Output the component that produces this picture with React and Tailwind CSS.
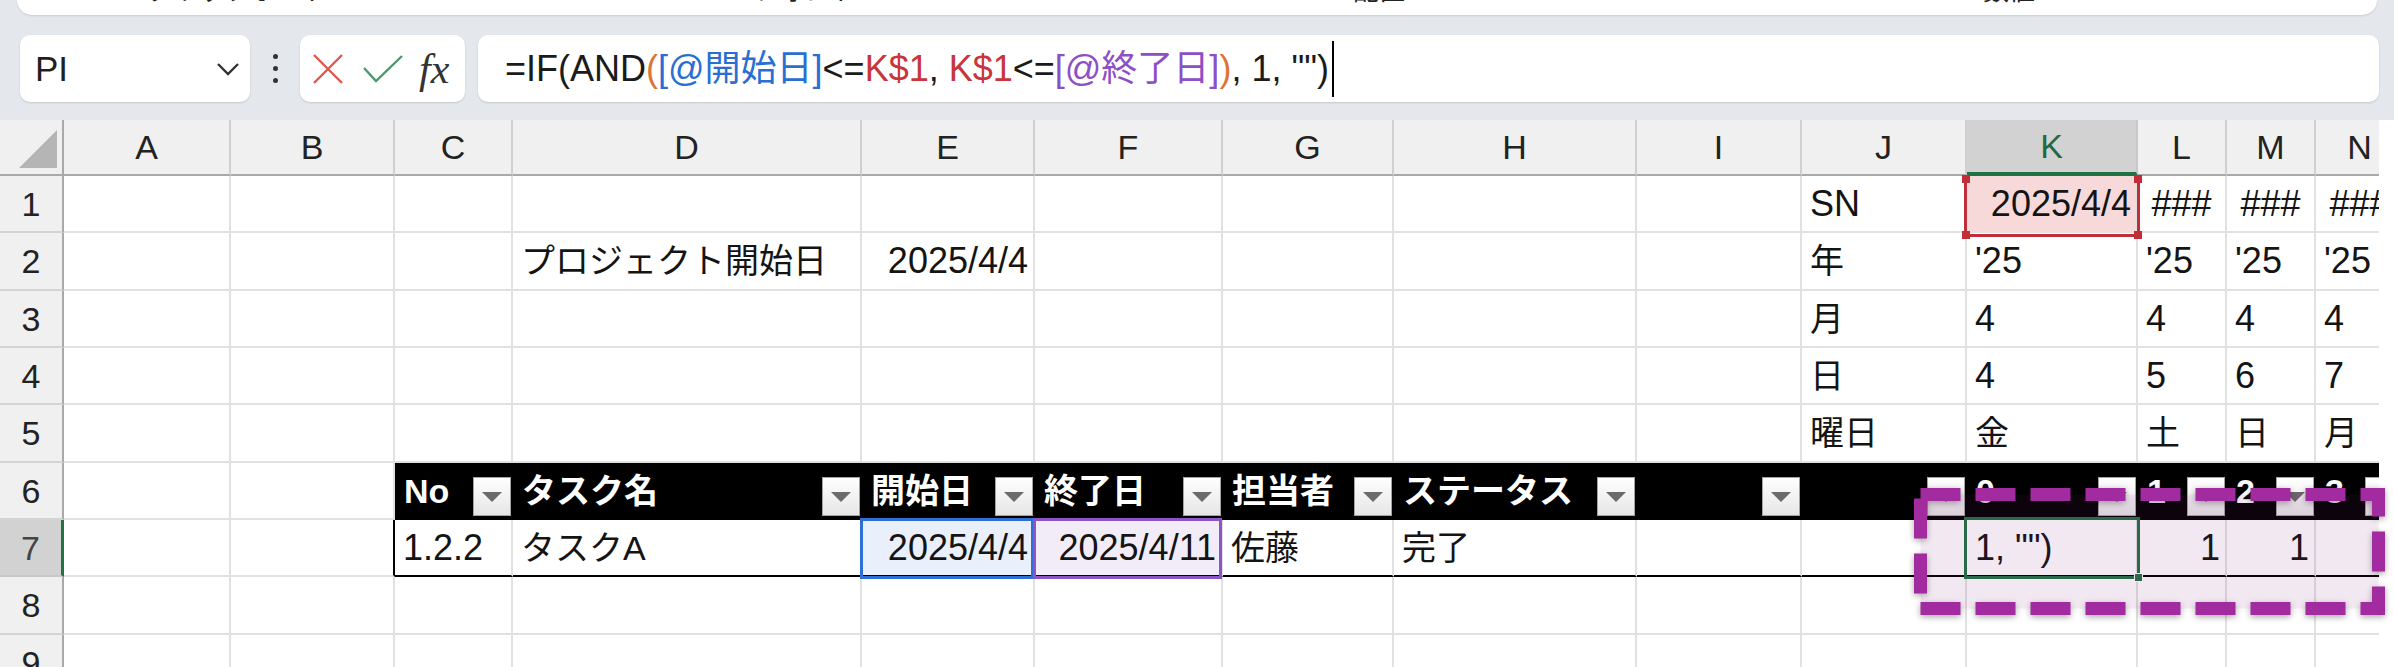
import React from 'react'

const COLS = [
  { key: 'A', w: 'w-[167px]' },
  { key: 'B', w: 'w-[164px]' },
  { key: 'C', w: 'w-[118px]' },
  { key: 'D', w: 'w-[349px]' },
  { key: 'E', w: 'w-[173px]' },
  { key: 'F', w: 'w-[188px]' },
  { key: 'G', w: 'w-[171px]' },
  { key: 'H', w: 'w-[243px]' },
  { key: 'I', w: 'w-[165px]' },
  { key: 'J', w: 'w-[165px]' },
  { key: 'K', w: 'w-[171px]' },
  { key: 'L', w: 'w-[89px]' },
  { key: 'M', w: 'w-[89px]' },
  { key: 'N', w: 'w-[89px]' },
]

// row heights (px) so that the rows land where the sheet draws them
const ROW_H = ['h-[57px]', 'h-[58px]', 'h-[57px]', 'h-[57px]', 'h-[58px]', 'h-[57px]', 'h-[57px]', 'h-[58px]', 'h-[57px]']

const CELLS = {
  J1: { v: 'SN' },
  K1: { v: '2025/4/4', align: 'right', mark: 'red' },
  L1: { v: '###', align: 'center' },
  M1: { v: '###', align: 'center' },
  N1: { v: '###', align: 'center' },
  D2: { v: 'プロジェクト開始日' },
  E2: { v: '2025/4/4', align: 'right' },
  J2: { v: '年' },
  K2: { v: "'25" },
  L2: { v: "'25" },
  M2: { v: "'25" },
  N2: { v: "'25" },
  J3: { v: '月' },
  K3: { v: '4' },
  L3: { v: '4' },
  M3: { v: '4' },
  N3: { v: '4' },
  J4: { v: '日' },
  K4: { v: '4' },
  L4: { v: '5' },
  M4: { v: '6' },
  N4: { v: '7' },
  J5: { v: '曜日' },
  K5: { v: '金' },
  L5: { v: '土' },
  M5: { v: '日' },
  N5: { v: '月' },
  C6: { v: 'No' },
  D6: { v: 'タスク名' },
  E6: { v: '開始日' },
  F6: { v: '終了日' },
  G6: { v: '担当者' },
  H6: { v: 'ステータス' },
  I6: { v: '' },
  J6: { v: '' },
  K6: { v: '0' },
  L6: { v: '1' },
  M6: { v: '2' },
  N6: { v: '3' },
  C7: { v: '1.2.2' },
  D7: { v: 'タスクA' },
  E7: { v: '2025/4/4', align: 'right', mark: 'blue' },
  F7: { v: '2025/4/11', align: 'right', mark: 'purple' },
  G7: { v: '佐藤' },
  H7: { v: '完了' },
  K7: { v: '1, "")', mark: 'active' },
  L7: { v: '1', align: 'right' },
  M7: { v: '1', align: 'right' },
}

const hasCjk = (s) => /[\u3000-\u9fff\uff00-\uffef]/.test(s || '')

function FilterButton() {
  return (
    <span className="mb-[2px] ml-auto flex h-[39px] w-[38px] shrink-0 items-center justify-center self-end border border-[#a3a3a3] bg-gradient-to-b from-white to-[#e6e6e6]">
      <svg width="20" height="10" viewBox="0 0 20 10">
        <path d="M0 0H20L10 10Z" fill="#6b6b6b" />
      </svg>
    </span>
  )
}

function Mark({ kind }) {
  if (kind === 'red') {
    return (
      <div className="pointer-events-none absolute -bottom-[6px] -left-[3px] -right-[4px] top-0 z-10 border-x-[3px] border-b-[3px] border-[#c32d37]">
        <span className="absolute -left-[5px] -top-[1px] h-[8px] w-[8px] bg-[#c32d37]" />
        <span className="absolute -right-[5px] -top-[1px] h-[8px] w-[8px] bg-[#c32d37]" />
        <span className="absolute -bottom-[5px] -left-[5px] h-[8px] w-[8px] bg-[#c32d37]" />
        <span className="absolute -bottom-[5px] -right-[5px] h-[8px] w-[8px] bg-[#c32d37]" />
      </div>
    )
  }
  if (kind === 'blue') {
    return <div className="pointer-events-none absolute -bottom-[4px] -left-[2px] -right-[1px] -top-[2px] z-10 border-[3px] border-[#2d6fd2]" />
  }
  if (kind === 'purple') {
    return <div className="pointer-events-none absolute -bottom-[4px] -left-[2px] -right-[1px] -top-[2px] z-10 border-[3px] border-[#8c55c6]" />
  }
  return (
    <div className="pointer-events-none absolute -bottom-[4px] -left-[3px] -right-[4px] -top-[3px] z-10 border-[3px] border-[#217346]">
      <span className="absolute -bottom-[6px] -right-[6px] h-[9px] w-[9px] border border-white bg-[#217346]" />
    </div>
  )
}

function Cell({ col, ci, row }) {
  const c = CELLS[col.key + row] || {}
  const isHead = row === 6 && ci >= 2
  const inTable = row === 7 && ci >= 2

  if (isHead) {
    return (
      <div className={`${col.w} relative flex shrink-0 items-center whitespace-nowrap border-b-2 border-r-2 border-black bg-black pl-[9px] text-[34px] font-bold leading-none text-white`}>
        <span>{c.v}</span>
        <FilterButton />
      </div>
    )
  }

  let cls = `${col.w} relative flex shrink-0 items-center whitespace-nowrap border-b-2 border-r-2 leading-none text-[#141414]`
  cls += hasCjk(c.v) ? ' text-[34px]' : ' text-[36px]'
  if (inTable) cls += ' border-b-black border-r-[#e1e1e1]'
  else if (row === 7 && col.key === 'B') cls += ' border-b-[#e1e1e1] border-r-black'
  else cls += ' border-b-[#e1e1e1] border-r-[#e1e1e1]'

  if (c.align === 'right') cls += ' justify-end pr-[5px]'
  else if (c.align === 'center') cls += ' justify-center'
  else cls += ' pl-[8px]'

  if (c.mark === 'red') cls += ' bg-[#f7d9da]'
  else if (c.mark === 'blue') cls += ' bg-[#e9f0fb]'
  else if (c.mark === 'purple') cls += ' bg-[#f2ecf8]'
  else cls += ' bg-white'

  return (
    <div className={cls}>
      <span>{c.v}</span>
      {c.mark ? <Mark kind={c.mark} /> : null}
    </div>
  )
}

function FormulaBar() {
  return (
    <div className="h-[120px] bg-[#e4e7eb]">
      <div className="mx-[17px] flex h-[15px] items-start overflow-hidden rounded-b-[16px] bg-white text-[26px] leading-none text-[#222] shadow-[0_1px_2px_rgba(0,0,0,0.12)]">
        <span className="-mt-[22px] ml-[130px] w-[200px]">クリップボード</span>
        <span className="-mt-[22px] ml-[406px] w-[110px]">フォント</span>
        <span className="-mt-[22px] ml-[490px] w-[60px]">配置</span>
        <span className="-mt-[22px] ml-[570px] w-[60px]">数値</span>
      </div>

      <div className="mt-[20px] flex h-[67px] items-stretch pl-[20px]">
        <div className="flex w-[230px] shrink-0 items-center rounded-[10px] bg-white pl-[15px] pr-[10px] shadow-[0_1px_2px_rgba(0,0,0,0.14)]">
          <span className="text-[35px] leading-none text-[#1f1f1f]">PI</span>
          <svg className="ml-auto" width="24" height="14" viewBox="0 0 24 14">
            <path d="M2 2L12 12L22 2" fill="none" stroke="#333" strokeWidth="2.4" />
          </svg>
        </div>

        <div className="flex w-[50px] shrink-0 flex-col items-center justify-center gap-[7px]">
          <span className="h-[5px] w-[5px] rounded-full bg-[#333]" />
          <span className="h-[5px] w-[5px] rounded-full bg-[#333]" />
          <span className="h-[5px] w-[5px] rounded-full bg-[#333]" />
        </div>

        <div className="flex w-[165px] shrink-0 items-center rounded-[10px] bg-white pl-[13px] shadow-[0_1px_2px_rgba(0,0,0,0.14)]">
          <svg width="30" height="30" viewBox="0 0 30 30">
            <path d="M1 1L29 29M29 1L1 29" stroke="#e0584d" strokeWidth="2.4" />
          </svg>
          <svg className="ml-[20px]" width="40" height="28" viewBox="0 0 40 28">
            <path d="M1 13L13 26L39 1" fill="none" stroke="#4b9a6b" strokeWidth="2.4" />
          </svg>
          <span className="ml-[16px] font-['Liberation_Serif',serif] text-[42px] italic leading-none text-[#333]">fx</span>
        </div>

        <div className="ml-[13px] flex w-[1901px] shrink-0 items-center rounded-[10px] bg-white pl-[27px] text-[36px] leading-none text-[#1b1b1b] shadow-[0_1px_2px_rgba(0,0,0,0.14)]">
          <span>=IF(AND</span>
          <span className="text-[#dd7436]">(</span>
          <span className="text-[#2a6fd0]">[@開始日]</span>
          <span>&lt;=</span>
          <span className="text-[#c9353a]">K$1</span>
          <span>,&nbsp;</span>
          <span className="text-[#c9353a]">K$1</span>
          <span>&lt;=</span>
          <span className="text-[#8d4fc5]">[@終了日]</span>
          <span className="text-[#dd7436]">)</span>
          <span>, 1, "")</span>
          <span className="ml-[3px] h-[56px] w-[2px] bg-black" />
        </div>
      </div>
    </div>
  )
}

export default function App() {
  return (
    <div className="relative h-[667px] w-[2394px] overflow-hidden bg-white font-['Liberation_Sans','Noto_Sans_CJK_JP',sans-serif]">
      <FormulaBar />

      <div className="w-[2379px] overflow-hidden">
        {/* column headers */}
        <div className="flex h-[56px]">
          <div className="w-[64px] shrink-0 border-b-2 border-r-2 border-[#a9a9a9] bg-[#f0f0f0]">
            <svg width="62" height="54" viewBox="0 0 62 54">
              <polygon points="19,48 57,10 57,48" fill="#b5b5b5" />
            </svg>
          </div>
          {COLS.map((col) =>
            col.key === 'K' ? (
              <div
                key={col.key}
                className={`${col.w} flex shrink-0 items-center justify-center border-b-[4px] border-r-2 border-b-[#1f7244] border-r-[#c8c8c8] bg-[#d2d2d2] text-[34px] leading-none text-[#1f6b45]`}
              >
                {col.key}
              </div>
            ) : (
              <div
                key={col.key}
                className={`${col.w} flex shrink-0 items-center justify-center border-b-2 border-r-2 border-b-[#a9a9a9] border-r-[#d0d0d0] bg-[#f0f0f0] text-[34px] leading-none text-[#222]`}
              >
                {col.key}
              </div>
            ),
          )}
        </div>

        {/* rows */}
        {ROW_H.map((h, ri) => {
          const row = ri + 1
          return (
            <div key={row} className={`flex ${h}`}>
              {row === 7 ? (
                <div className="flex w-[64px] shrink-0 items-center justify-center border-b-2 border-r-[3px] border-b-[#c8c8c8] border-r-[#217346] bg-[#d2d2d2] text-[34px] leading-none text-[#444]">
                  {row}
                </div>
              ) : (
                <div className="flex w-[64px] shrink-0 items-center justify-center border-b-2 border-r-2 border-b-[#d4d4d4] border-r-[#a9a9a9] bg-[#f0f0f0] text-[34px] leading-none text-[#222]">
                  {row}
                </div>
              )}
              {COLS.map((col, ci) => (
                <Cell key={col.key} col={col} ci={ci} row={row} />
              ))}
            </div>
          )
        })}
      </div>

      {/* hand-drawn highlight over the gantt cells */}
      <svg
        className="pointer-events-none absolute left-[1914px] top-[488px] z-20 drop-shadow-[0_2px_3px_rgba(0,0,0,0.35)]"
        width="471"
        height="127"
        viewBox="0 0 471 127"
      >
        <rect
          x="6.5"
          y="6.5"
          width="458"
          height="114"
          fill="rgba(160,40,160,0.08)"
          stroke="#a22b9f"
          strokeWidth="13"
          strokeDasharray="40 15"
        />
      </svg>
    </div>
  )
}
